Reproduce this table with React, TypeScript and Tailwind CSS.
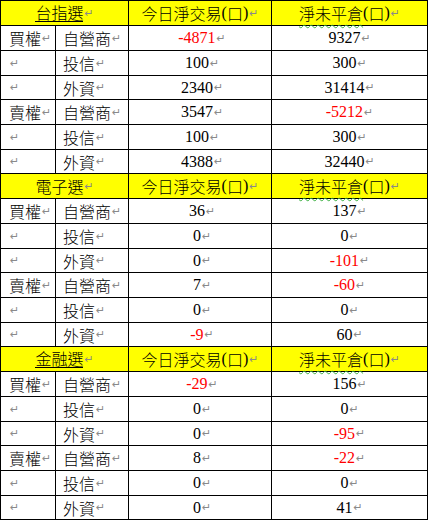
type Row = { side: string; who: string; today: number; open: number };

type Section = { title: string; underline: boolean; rows: Row[] };

const sections: Section[] = [
  {
    title: '台指選',
    underline: true,
    rows: [
      { side: '買權', who: '自營商', today: -4871, open: 9327 },
      { side: '', who: '投信', today: 100, open: 300 },
      { side: '', who: '外資', today: 2340, open: 31414 },
      { side: '賣權', who: '自營商', today: 3547, open: -5212 },
      { side: '', who: '投信', today: 100, open: 300 },
      { side: '', who: '外資', today: 4388, open: 32440 },
    ],
  },
  {
    title: '電子選',
    underline: false,
    rows: [
      { side: '買權', who: '自營商', today: 36, open: 137 },
      { side: '', who: '投信', today: 0, open: 0 },
      { side: '', who: '外資', today: 0, open: -101 },
      { side: '賣權', who: '自營商', today: 7, open: -60 },
      { side: '', who: '投信', today: 0, open: 0 },
      { side: '', who: '外資', today: -9, open: 60 },
    ],
  },
  {
    title: '金融選',
    underline: true,
    rows: [
      { side: '買權', who: '自營商', today: -29, open: 156 },
      { side: '', who: '投信', today: 0, open: 0 },
      { side: '', who: '外資', today: 0, open: -95 },
      { side: '賣權', who: '自營商', today: 8, open: -22 },
      { side: '', who: '投信', today: 0, open: 0 },
      { side: '', who: '外資', today: 0, open: 41 },
    ],
  },
];

// row heights inside one section (header + 6 rows), lines land on 25/50/75/99/124/149/173
const heights = ['h-[25px]', 'h-[25px]', 'h-[25px]', 'h-[24px]', 'h-[25px]', 'h-[25px]', 'h-[24px]'];

const cjk = "font-['Noto_Sans_CJK_TC','Noto_Sans',sans-serif] font-light";
const num = "font-['Liberation_Serif','Times_New_Roman',serif] font-normal";

function Mark() {
  return <span className="ml-[1px] font-['DejaVu_Sans',sans-serif] font-normal text-[11px] text-[#8a8a8a]">↵</span>;
}

function Num({ v }: { v: number }) {
  return (
    <span className="flex items-center">
      <span className={`${num} text-[16px] ${v < 0 ? 'text-[#ff0000]' : 'text-black'}`}>{v}</span>
      <Mark />
    </span>
  );
}

export default function App() {
  return (
    <div className="w-[428px] border-l border-t border-black bg-white text-black">
      {sections.map((s) => (
        <div key={s.title}>
          <div className={`grid grid-cols-[128px_143px_156px] bg-[#ffff00] ${heights[0]} ${cjk} text-[16px] leading-none`}>
            <div className="flex items-center justify-center border-r border-b border-black">
              <span className={s.underline ? 'border-b border-black pb-[1px]' : ''}>{s.title}</span>
              <Mark />
            </div>
            <div className="flex items-center justify-center border-r border-b border-black">
              今日淨交易<span className={num}>(</span>口<span className={num}>)</span>
              <Mark />
            </div>
            <div className="flex items-center justify-center border-r border-b border-black">
              <span className="underline decoration-wavy decoration-[#3cb043] decoration-1 underline-offset-[4px]">淨未平倉</span>
              <span className={num}>(</span>口<span className={num}>)</span>
              <Mark />
            </div>
          </div>
          {s.rows.map((r, i) => (
            <div key={i} className={`grid grid-cols-[55px_73px_143px_156px] ${heights[i + 1]} ${cjk} text-[16px] leading-none`}>
              <div className="flex items-center border-r border-b border-black pl-[8px]">
                {r.side}
                <Mark />
              </div>
              <div className="flex items-center border-r border-b border-black pl-[7px]">
                {r.who}
                <Mark />
              </div>
              <div className="flex items-center justify-center border-r border-b border-black pl-[4px]">
                <Num v={r.today} />
              </div>
              <div className="flex items-center justify-center border-r border-b border-black">
                <Num v={r.open} />
              </div>
            </div>
          ))}
        </div>
      ))}
    </div>
  );
}
